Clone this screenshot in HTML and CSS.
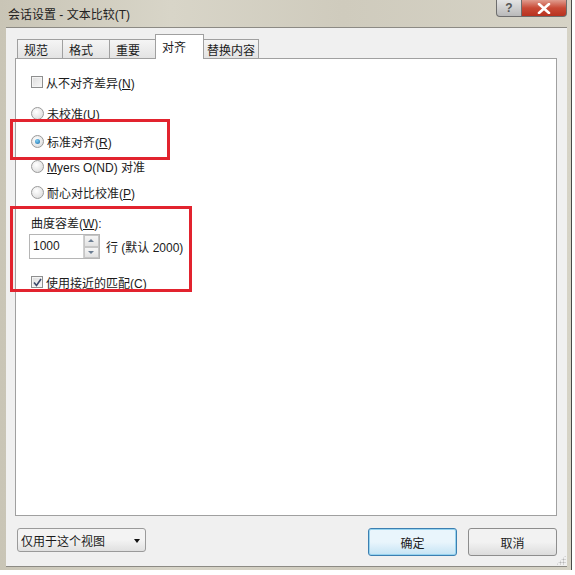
FILE: index.html
```html
<!DOCTYPE html>
<html lang="zh-CN">
<head>
  <meta charset="UTF-8">
  <title>会话设置 - 文本比较(T)</title>
  <link rel="stylesheet" href="styles.css">
</head>
<body>
  <div class="window">
    <!-- title bar -->
    <div class="titlebar">
      <span class="title">会话设置 - 文本比较(T)</span>
      <div class="caption-btns">
        <span class="cap help">?</span>
        <span class="cap close">
          <svg width="14" height="11" viewBox="0 0 14 11"><path d="M2 1 L12 10 M12 1 L2 10" stroke="#fff" stroke-width="2.6" stroke-linecap="round"/></svg>
        </span>
      </div>
    </div>

    <div class="client">
      <div class="tabs">
        <span class="tab">规范</span>
        <span class="tab">格式</span>
        <span class="tab">重要</span>
        <span class="tab active">对齐</span>
        <span class="tab">替换内容</span>
      </div>

      <div class="panel">
        <label class="row r1"><span class="check"></span><span>从不对齐差异(<u>N</u>)</span></label>
        <label class="row r2"><span class="radio"></span><span>未校准(<u>U</u>)</span></label>
        <label class="row r3"><span class="radio on"></span><span>标准对齐(<u>R</u>)</span></label>
        <label class="row r4"><span class="radio"></span><span><u>M</u>yers O(ND) 对准</span></label>
        <label class="row r5"><span class="radio"></span><span>耐心对比校准(<u>P</u>)</span></label>
        <div class="row r6"><span>曲度容差(<u>W</u>):</span></div>
        <div class="spin-row">
          <div class="spin">
            <span class="spin-val">1000</span>
            <span class="spin-btns">
              <span class="sb up"></span>
              <span class="sb down"></span>
            </span>
          </div>
          <span>行 (默认 2000)</span>
        </div>
        <label class="row r7"><span class="check on">
          <svg width="9" height="9" viewBox="0 0 9 9"><path d="M1 4.5 L3.5 7.5 L8 1" fill="none" stroke="#3d4a6b" stroke-width="1.6"/></svg>
        </span><span>使用接近的匹配(<u>C</u>)</span></label>
      </div>

      <div class="footer">
        <div class="combo">仅用于这个视图<span class="arrow"></span></div>
        <div class="actions">
          <button class="btn default">确定</button>
          <button class="btn">取消</button>
        </div>
      </div>
      <span class="grip"></span>
    </div>

    <!-- annotation boxes -->
    <div class="mark mark1"></div>
    <div class="mark mark2"></div>
  </div>
</body>
</html>
```

FILE: styles.css
```css
body {
  margin: 0;
  background: #fff;
  font-family: "Liberation Sans", "Noto Sans CJK SC", sans-serif;
  font-size: 12px;
  color: #1b1b1b;
}
.window {
  position: relative;
  width: 572px;
  height: 570px;
  background: linear-gradient(90deg, #c9c5b6 0%, #d8d5c8 30%, #cfcbbd 60%, #d6d3c6 100%);
  border-right: 1px solid #4a4a48;
  box-sizing: border-box;
}
.titlebar {
  position: relative;
  height: 27px;
  display: flex;
  align-items: center;
  padding-left: 8px;
}
.title {
  font-size: 12px;
  color: #222;
}
.caption-btns {
  position: absolute;
  right: 4px;
  top: 0;
  display: flex;
}
.cap {
  height: 17px;
  display: flex;
  align-items: center;
  justify-content: center;
  border: 1px solid #6d6d6d;
  border-top: none;
  box-sizing: border-box;
}
.help {
  width: 26px;
  border-radius: 0 0 0 4px;
  background: linear-gradient(#e4e4e4, #b9b9b9);
  color: #555;
  font-weight: bold;
  font-size: 12px;
}
.close {
  width: 45px;
  border-left: none;
  border-radius: 0 0 4px 0;
  background: linear-gradient(#e09c8e, #c94a36 50%, #b8321f);
}
.client {
  position: relative;
  margin: 0 4px 0 6px;
  height: 540px;
  background: #f0f0f0;
  border-top: 1px solid #8c8a84;
  border-bottom: 1px solid #8c8a84;
  padding: 6px 10px 0 9px;
  box-sizing: border-box;
}
.tabs {
  display: flex;
  align-items: flex-end;
  height: 24px;
  padding-left: 2px;
}
.tab {
  height: 19px;
  padding: 0 6px;
  display: flex;
  align-items: center;
  white-space: nowrap;
  border: 1px solid #a0a0a0;
  border-bottom: none;
  margin-right: -1px;
  background: linear-gradient(#f5f5f5, #e3e3e3);
  font-size: 12px;
  box-sizing: border-box;
}
.tab:nth-child(1) { width: 46px; }
.tab:nth-child(2) { width: 48px; }
.tab:nth-child(3) { width: 47px; }
.tab.active {
  height: 25px;
  width: 49px;
  background: #fff;
  align-items: flex-start;
  padding-top: 3px;
  position: relative;
  z-index: 1;
  margin-bottom: -1px;
}
.tab:nth-child(5) { width: 56px; padding: 0 3px; }
.panel {
  height: 458px;
  background: #fff;
  border: 1px solid #a0a0a0;
  box-sizing: border-box;
  padding: 15px 0 0 15px;
}
.row {
  display: flex;
  align-items: center;
  height: 16px;
  gap: 3px;
  white-space: nowrap;
}
.r2 { margin-top: 15px; }
.r3 { margin-top: 12px; }
.r4 { margin-top: 9px; }
.r5 { margin-top: 10px; }
.r6 { margin-top: 14px; }
.r7 { margin-top: 15px; }
.check {
  width: 10px;
  height: 10px;
  border: 1px solid #8e8f8f;
  background: linear-gradient(135deg, #dcdcdc, #f8f8f8);
  box-shadow: inset 0 0 0 1px #f4f4f4;
  display: flex;
  align-items: center;
  justify-content: center;
}
.radio {
  width: 11px;
  height: 11px;
  border: 1px solid #9a9a9a;
  border-radius: 50%;
  background: radial-gradient(circle at 40% 35%, #fff, #d6d6d6);
  position: relative;
}
.radio.on::after {
  content: "";
  position: absolute;
  left: 3px;
  top: 3px;
  width: 5px;
  height: 5px;
  border-radius: 50%;
  background: radial-gradient(circle at 40% 35%, #7fd0f5, #1a6aa8);
}
.spin-row {
  display: flex;
  align-items: center;
  gap: 6px;
  margin-top: 4px;
  margin-left: -2px;
}
.spin {
  width: 71px;
  height: 25px;
  border: 1px solid #b5b5b5;
  box-sizing: border-box;
  display: flex;
  justify-content: space-between;
}
.spin-val {
  padding: 4px 0 0 3px;
}
.spin-btns {
  width: 15px;
  display: flex;
  flex-direction: column;
  border-left: 1px solid #d0d0d0;
}
.sb {
  flex: 1;
  background: linear-gradient(#f6f6f6, #e2e2e2);
  border: 1px solid #c6c6c6;
  position: relative;
}
.sb::after {
  content: "";
  position: absolute;
  left: 3px;
  width: 0;
  height: 0;
  border-left: 3px solid transparent;
  border-right: 3px solid transparent;
}
.up::after { top: 3px; border-bottom: 3px solid #6b7d92; }
.down::after { top: 3px; border-top: 3px solid #6b7d92; }
.footer {
  display: flex;
  justify-content: space-between;
  margin-top: 12px;
  padding-left: 2px;
}
.combo {
  width: 129px;
  height: 24px;
  border: 1px solid #9a9a9a;
  border-radius: 3px;
  background: linear-gradient(#f3f3f3 50%, #e0e0e0);
  box-sizing: border-box;
  display: flex;
  align-items: center;
  padding-left: 3px;
  position: relative;
}
.arrow {
  position: absolute;
  right: 5px;
  top: 10px;
  border-left: 3px solid transparent;
  border-right: 3px solid transparent;
  border-top: 4px solid #111;
}
.actions {
  display: flex;
  gap: 11px;
}
.btn {
  width: 89px;
  height: 28px;
  border: 1px solid #8d8d8d;
  border-radius: 3px;
  background: linear-gradient(#f2f2f2 50%, #dcdcdc);
  font-family: inherit;
  font-size: 12px;
  color: #1b1b1b;
  padding: 0;
}
.btn.default {
  border-color: #3c7fb1;
  background: linear-gradient(#e9f5fc 50%, #c4e3f4);
  box-shadow: inset 0 0 0 1px #96d3ef;
}
.grip {
  position: absolute;
  right: 1px;
  bottom: 1px;
  width: 10px;
  height: 10px;
  background: radial-gradient(circle, #b5b5b5 0.8px, transparent 1.2px) 0 0 / 3px 3px;
  clip-path: polygon(100% 0, 100% 100%, 0 100%);
}
.mark {
  position: absolute;
  border: 3px solid #e2232e;
  box-sizing: border-box;
}
.mark1 {
  left: 10px;
  top: 119px;
  width: 160px;
  height: 41px;
}
.mark2 {
  left: 10px;
  top: 206px;
  width: 182px;
  height: 86px;
}
```
